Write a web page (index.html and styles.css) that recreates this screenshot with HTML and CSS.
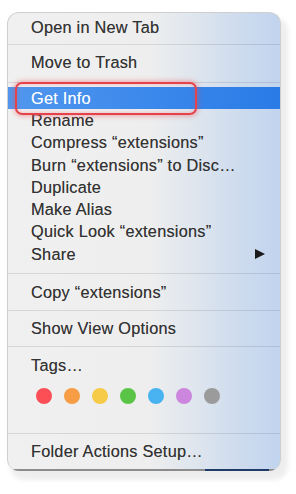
FILE: index.html
```html
<!DOCTYPE html>
<html>
<head>
<meta charset="utf-8">
<link rel="stylesheet" href="styles.css">
</head>
<body>
<div class="menu">
  <div class="item first">Open in New Tab</div>
  <div class="sep"></div>
  <div class="item second">Move to Trash</div>
  <div class="sep"></div>
  <div class="group">
    <div class="row active">Get Info</div>
    <div class="row">Rename</div>
    <div class="row">Compress “extensions”</div>
    <div class="row">Burn “extensions” to Disc…</div>
    <div class="row">Duplicate</div>
    <div class="row">Make Alias</div>
    <div class="row">Quick Look “extensions”</div>
    <div class="row share"><span>Share</span><span class="arrow"></span></div>
  </div>
  <div class="sep"></div>
  <div class="item copy">Copy “extensions”</div>
  <div class="sep"></div>
  <div class="item view">Show View Options</div>
  <div class="sep"></div>
  <div class="tags">
    <div class="tags-label">Tags…</div>
    <div class="dots">
      <span class="dot red"></span>
      <span class="dot orange"></span>
      <span class="dot yellow"></span>
      <span class="dot green"></span>
      <span class="dot blue"></span>
      <span class="dot purple"></span>
      <span class="dot gray"></span>
    </div>
  </div>
  <div class="sep"></div>
  <div class="item folder">Folder Actions Setup…</div>
  <div class="bottom-line"></div>
</div>
<div class="callout"></div>
</body>
</html>
```
FILE: styles.css
```css
html, body {
  margin: 0;
  padding: 0;
  background: #ffffff;
}
body {
  position: relative;
  width: 296px;
  height: 494px;
  overflow: hidden;
  font-family: "Liberation Sans", Arial, sans-serif;
  font-size: 16.3px;
  letter-spacing: 0.25px;
  color: #333333;
  text-shadow: 0 0 0.6px rgba(0, 0, 0, 0.45);
}
.menu {
  margin: 12px 0 0 7px;
  width: 274px;
  box-sizing: border-box;
  border: 1px solid #cfcfcf;
  border-bottom: none;
  border-radius: 12px;
  overflow: hidden;
  display: flex;
  flex-direction: column;
  background: linear-gradient(90deg, #f0f0f0 0%, #eeeeee 52%, #dfe6ee 68%, #cfdcee 84%, #c1d4ee 100%);
  box-shadow: 5px 7px 5px 2px rgba(0, 0, 0, 0.07);
}
.item {
  display: flex;
  align-items: center;
  padding-left: 23px;
  box-sizing: border-box;
  white-space: nowrap;
}
.first { height: 31px; padding-bottom: 3px; }
.second { height: 37px; padding-bottom: 3px; }
.copy { height: 36px; }
.view { height: 35px; }
.folder { height: 35px; }
.sep {
  height: 1px;
  background: rgba(0, 0, 0, 0.1);
}
.group {
  height: 190px;
  box-sizing: border-box;
  padding-top: 4px;
  display: flex;
  flex-direction: column;
}
.row {
  height: 22.3px;
  flex: none;
  display: flex;
  align-items: center;
  padding-left: 23px;
  padding-right: 15px;
  white-space: nowrap;
}
.row.active {
  color: #ffffff;
  text-shadow: 0 0 0.6px rgba(255, 255, 255, 0.5);
  background: linear-gradient(90deg, #5197ee 0%, #3c89ec 50%, #2a7be6 100%);
}
.row.share {
  justify-content: space-between;
}
.arrow {
  width: 0;
  height: 0;
  border-left: 10px solid #1a1a1a;
  border-top: 5px solid transparent;
  border-bottom: 5px solid transparent;
}
.tags {
  height: 86px;
  box-sizing: border-box;
  padding: 7px 0 0 23px;
}
.tags-label {
  height: 22px;
  line-height: 22px;
}
.dots {
  display: flex;
  gap: 12px;
  margin: 12px 0 0 4.5px;
}
.dot {
  width: 16px;
  height: 16px;
  border-radius: 50%;
}
.red { background: #fb4f55; }
.orange { background: #f79d45; }
.yellow { background: #f6cb4a; }
.green { background: #5ac446; }
.blue { background: #49b3f2; }
.purple { background: #cc86dd; }
.gray { background: #9b9b9b; }
.bottom-line {
  height: 2px;
  background: linear-gradient(90deg, #8c8c8c 0%, #8c8c8c 72.5%, #1f3b68 72.5%, #1f3b68 96%, #8c8c8c 96%);
}
.callout {
  position: absolute;
  left: 15px;
  top: 82px;
  width: 182px;
  height: 33px;
  box-sizing: border-box;
  border: 2px solid #e4434c;
  border-radius: 7px;
  box-shadow: 0 0 5px 1px rgba(235, 70, 80, 0.45), inset 0 0 4px rgba(235, 70, 80, 0.35);
}
```
